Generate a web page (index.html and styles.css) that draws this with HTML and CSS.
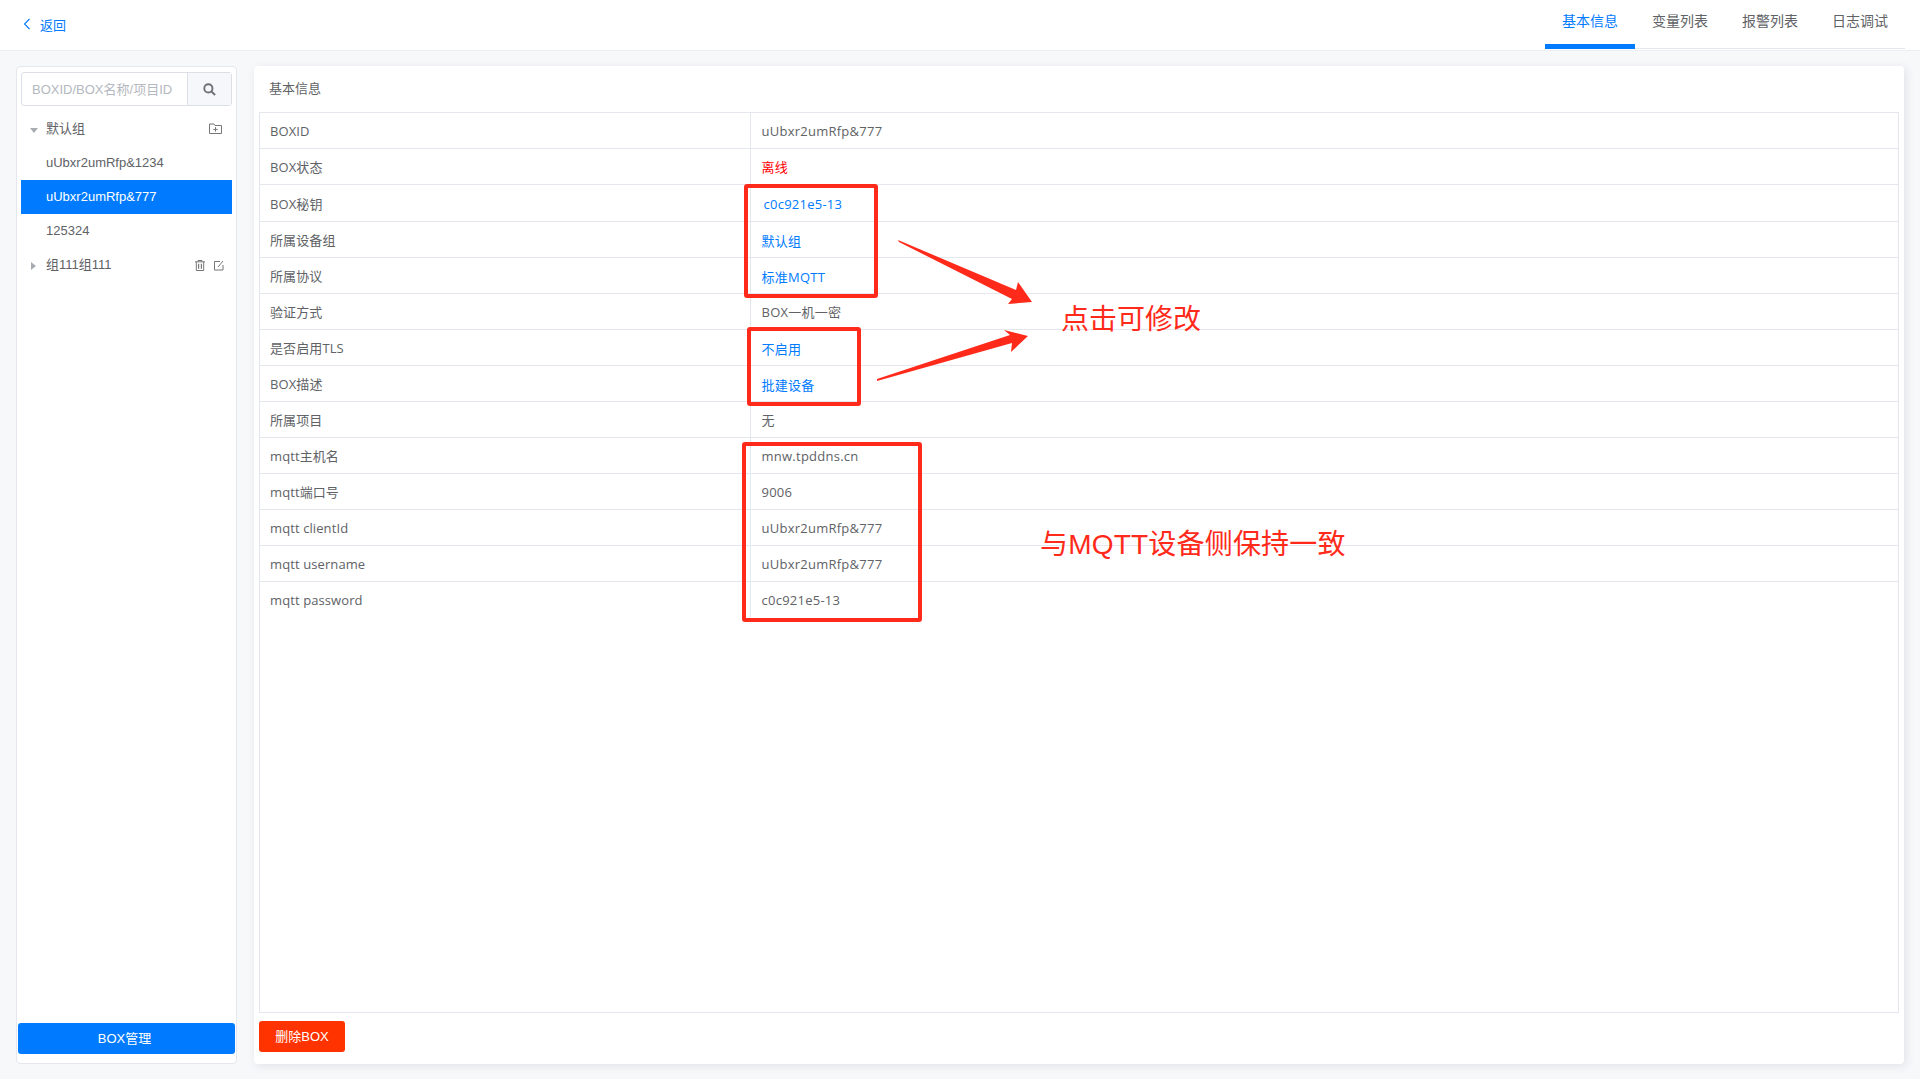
FILE: index.html
```html
<!DOCTYPE html>
<html>

<head lang="en">
    <meta charset="utf-8" />
    <title>BOX基本信息</title>
    <link rel="stylesheet" href="styles.css">
</head>

<body>
    <header class="topbar">
        <a class="back">
            <svg class="back-icon" viewBox="0 0 8 12" width="8" height="12">
                <path d="M6.5 1 L1.5 6 L6.5 11" fill="none" stroke="#007bff" stroke-width="1.1" />
            </svg>
            返回
        </a>
        <ul class="tabs">
            <li class="tab active">基本信息</li>
            <li class="tab">变量列表</li>
            <li class="tab">报警列表</li>
            <li class="tab">日志调试</li>
        </ul>
    </header>

    <div class="content">
        <aside class="sidebar">
            <div class="search">
                <div class="search-input">BOXID/BOX名称/项目ID</div>
                <div class="search-btn">
                    <svg viewBox="0 0 14 14" width="13" height="13">
                        <circle cx="5.8" cy="5.8" r="4.4" fill="none" stroke="#6b7078" stroke-width="2" />
                        <path d="M9 9 L13 13" stroke="#6b7078" stroke-width="2.2" />
                    </svg>
                </div>
            </div>
            <ul class="tree">
                <li class="group">
                    <span class="caret-down"></span>
                    <span class="tree-label">默认组</span>
                    <span class="tree-tools">
                        <svg viewBox="0 0 13 12" width="13" height="12">
                            <path d="M.5 10.5 V1 H5 L6 2.5 H12.5 V10.5 Z" fill="none" stroke="#777" />
                            <path d="M6.5 4.2 V8.6 M4.3 6.4 H8.7" stroke="#777" />
                        </svg>
                    </span>
                </li>
                <li class="device">uUbxr2umRfp&amp;1234</li>
                <li class="device selected">uUbxr2umRfp&amp;777</li>
                <li class="device">125324</li>
                <li class="group">
                    <span class="caret-right"></span>
                    <span class="tree-label">组111组111</span>
                    <span class="tree-tools narrow">
                        <svg viewBox="0 0 10 11" width="10" height="11">
                            <path d="M0 1.8 H10 M3 1.6 V.5 H7 V1.6" fill="none" stroke="#777" />
                            <path d="M1.3 2 V10.5 H8.7 V2" fill="none" stroke="#777" />
                            <path d="M3.6 3.8 V8.8 M6.4 3.8 V8.8" stroke="#777" stroke-width="1.2" />
                        </svg>
                        <svg viewBox="0 0 10 11" width="10" height="11">
                            <path d="M6 1.5 H.5 V10 H9 V5" fill="none" stroke="#777" />
                            <path d="M4 7 L9 1" stroke="#777" />
                        </svg>
                    </span>
                </li>
            </ul>
            <button class="btn-manage">BOX管理</button>
        </aside>

        <main class="card">
            <h2 class="card-title">基本信息</h2>
            <div class="table-frame">
                <table class="info">
                    <tr class="first"><td>BOXID</td><td>uUbxr2umRfp&amp;777</td></tr>
                    <tr><td>BOX状态</td><td class="offline">离线</td></tr>
                    <tr class="tall"><td>BOX秘钥</td><td class="edit key">c0c921e5-13</td></tr>
                    <tr><td>所属设备组</td><td class="edit">默认组</td></tr>
                    <tr><td>所属协议</td><td class="edit">标准MQTT</td></tr>
                    <tr><td>验证方式</td><td>BOX一机一密</td></tr>
                    <tr><td>是否启用TLS</td><td class="edit">不启用</td></tr>
                    <tr><td>BOX描述</td><td class="edit">批建设备</td></tr>
                    <tr><td>所属项目</td><td>无</td></tr>
                    <tr><td>mqtt主机名</td><td>mnw.tpddns.cn</td></tr>
                    <tr><td>mqtt端口号</td><td>9006</td></tr>
                    <tr><td>mqtt clientId</td><td>uUbxr2umRfp&amp;777</td></tr>
                    <tr><td>mqtt username</td><td>uUbxr2umRfp&amp;777</td></tr>
                    <tr><td>mqtt password</td><td>c0c921e5-13</td></tr>
                </table>
            </div>
            <button class="btn-delete">删除BOX</button>
        </main>
    </div>

    <!-- screenshot markup drawn on top of the page -->
    <div class="mark mark-a"></div>
    <div class="mark mark-b"></div>
    <div class="mark mark-c"></div>
    <svg class="arrows" viewBox="0 0 1920 1079" width="1920" height="1079">
        <polygon points="898,240 1016,290 1018,282 1032,302 1008,304 1012,299 899,242" fill="#ff2a1a" />
        <polygon points="877,379 1010,335 1004,330 1028,336 1011,352 1012,343 877,381" fill="#ff2a1a" />
    </svg>
    <div class="note note-a">点击可修改</div>
    <div class="note note-b">与MQTT设备侧保持一致</div>
</body>

</html>
```

FILE: styles.css
```css
* {
    box-sizing: border-box;
}

body {
    margin: 0;
    height: 1079px;
    overflow: hidden;
    background-color: #f7f8fa;
    color: #606266;
    font-family: "Liberation Sans", "Noto Sans CJK SC", sans-serif;
    font-size: 13px;
}

ul {
    list-style: none;
    margin: 0;
    padding: 0;
}

.topbar {
    height: 51px;
    padding: 0 15px 1px 23px;
    display: flex;
    justify-content: space-between;
    background-color: #fff;
    border-bottom: 1px solid #eceef2;
}

.back {
    display: flex;
    align-items: center;
    height: 48px;
    color: #007bff;
    font-size: 13px;
}

.back-icon {
    margin-right: 9px;
}

.tabs {
    display: flex;
    border-bottom: 1px solid #e4e7ed;
}

.tab {
    width: 90px;
    height: 49px;
    padding-top: 10px;
    text-align: center;
    font-size: 14px;
    line-height: 22px;
}

.tab.active {
    color: #007bff;
    border-bottom: 5px solid #007bff;
}

.content {
    height: 1013px;
    padding: 15px 16px 0;
    display: flex;
    gap: 17px;
}

.sidebar {
    width: 221px;
    height: 998px;
    padding: 5px 0 9px;
    display: flex;
    flex-direction: column;
    background-color: #fff;
    border: 1px solid #e4e7ed;
    border-radius: 4px;
}

.search {
    display: flex;
    height: 34px;
    margin: 0 4px;
    border: 1px solid #dcdfe6;
    border-radius: 3px;
}

.search-input {
    flex: 1;
    padding-left: 10px;
    line-height: 33px;
    color: #b4b8c0;
}

.search-btn {
    width: 44px;
    display: flex;
    align-items: center;
    justify-content: center;
    background-color: #f5f7fa;
    border-left: 1px solid #dcdfe6;
}

.tree {
    margin: 6px 4px 0;
    flex: 1;
}

.tree li {
    height: 34px;
    line-height: 34px;
    display: flex;
    align-items: center;
}

.device {
    padding-left: 25px;
}

.device.selected {
    background-color: #007bff;
    color: #fff;
}

.caret-down {
    width: 0;
    height: 0;
    margin: 2px 6px 0 9px;
    border-left: 4px solid transparent;
    border-right: 4px solid transparent;
    border-top: 5px solid #a8abb2;
}

.caret-right {
    width: 0;
    height: 0;
    margin: 2px 8px 0 10px;
    border-top: 4px solid transparent;
    border-bottom: 4px solid transparent;
    border-left: 5px solid #a8abb2;
}

.tree-label {
    flex: 1;
    margin-left: 2px;
}

.tree-tools {
    display: flex;
    align-items: center;
    gap: 9px;
    padding-right: 10px;
}

.tree-tools.narrow {
    padding-right: 8px;
}

.btn-manage {
    height: 31px;
    margin: 0 1px;
    padding: 0 4px 2px 0;
    border: none;
    border-radius: 3px;
    background-color: #007bff;
    color: #fff;
    font-family: inherit;
    font-size: 13px;
}

.card {
    width: 1650px;
    height: 998px;
    padding: 0 5px;
    background-color: #fff;
    border-radius: 4px;
    box-shadow: 2px 2px 10px rgba(60, 70, 90, .12);
}

.card-title {
    margin: 0;
    height: 46px;
    padding-left: 10px;
    font-size: 13px;
    font-weight: 400;
    line-height: 45px;
}

.table-frame {
    height: 901px;
    border: 1px solid #e4e7ed;
}

.info {
    width: 100%;
    table-layout: fixed;
    border-collapse: collapse;
    font-family: "Open Sans", "Noto Sans CJK SC", sans-serif;
    letter-spacing: .25px;
}

.info tr {
    height: 36px;
}

.info tr.first {
    height: 35px;
}

.info tr.tall {
    height: 37px;
}

.info td {
    padding: 1px 0 0 11px;
    border-bottom: 1px solid #e4e7ed;
}

.info td:first-child {
    width: 490px;
    padding-left: 10px;
    letter-spacing: .1px;
    border-right: 1px solid #e4e7ed;
}

.info tr:last-child td {
    border-bottom: none;
}

.offline {
    color: #f00;
}

.info .edit {
    color: #007bff;
    padding-top: 3px;
}

.info .key {
    padding-left: 13px;
}

.btn-delete {
    display: block;
    width: 86px;
    height: 31px;
    margin-top: 8px;
    padding: 0 0 2px;
    border: none;
    border-radius: 3px;
    background-color: #f30;
    color: #fff;
    font-family: inherit;
    font-size: 13px;
}

.mark {
    position: absolute;
    border: 4px solid #ff2a1a;
    border-radius: 3px;
}

.mark-a {
    left: 744px;
    top: 184px;
    width: 134px;
    height: 114px;
}

.mark-b {
    left: 747px;
    top: 327px;
    width: 114px;
    height: 79px;
}

.mark-c {
    left: 742px;
    top: 442px;
    width: 180px;
    height: 180px;
}

.arrows {
    position: absolute;
    left: 0;
    top: 0;
}

.note {
    position: absolute;
    color: #ff2a1a;
    font-size: 28px;
    line-height: 40px;
    white-space: nowrap;
}

.note-a {
    left: 1061px;
    top: 300px;
}

.note-b {
    left: 1040px;
    top: 525px;
    letter-spacing: .2px;
}
```
